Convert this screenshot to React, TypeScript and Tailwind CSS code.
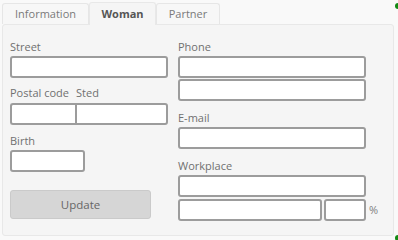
import React from 'react'

const font = { fontFamily: '"Open Sans", "Noto Sans", sans-serif' }

function Field({ className = '' }: { className?: string }) {
  return (
    <div
      className={`shrink-0 h-[22px] bg-white border-2 border-[#9c9c9c] rounded-[3px] ${className}`}
    />
  )
}

function Label({ children, className = '' }: { children: React.ReactNode; className?: string }) {
  return <div className={`h-4 leading-4 text-[11px] text-[#707070] ${className}`}>{children}</div>
}

export default function App() {
  const tabs = ['Information', 'Woman', 'Partner']

  return (
    <div className="relative w-[398px] h-[240px] bg-[#f9f9f9] overflow-hidden" style={font}>
      {/* status dots */}
      <div className="absolute right-[-3px] top-[3px] w-[6px] h-[6px] rounded-full bg-[#138a13]" />
      <div className="absolute right-[-3px] bottom-[-1px] w-[6px] h-[6px] rounded-full bg-[#138a13]" />

      {/* Tabs */}
      <div className="flex items-end pl-[2px] h-[24px]">
        {tabs.map((t) =>
          t === 'Woman' ? (
            <div
              key={t}
              className="w-[67px] h-[23px] -mb-px relative z-10 bg-[#f5f5f5] border border-b-0 border-[#e8e8e8] rounded-t-[3px] flex items-center justify-center text-[11px] font-bold text-[#555]"
            >
              {t}
            </div>
          ) : (
            <div
              key={t}
              className={`${t === 'Information' ? 'w-[87px]' : 'w-[64px]'} h-[21px] bg-[#f7f7f7] border border-b-0 border-[#e6e6e6] rounded-t-[3px] flex items-center justify-center text-[11px] text-[#7a7a7a]`}
            >
              {t}
            </div>
          )
        )}
      </div>

      {/* Panel */}
      <div className="ml-[2px] w-[392px] h-[212px] bg-[#f5f5f5] border border-[#e8e8e8] rounded-[3px] flex gap-[10px] pl-[7px] pt-[14px]">
        {/* left column */}
        <div className="w-[158px] flex flex-col">
          <Label>Street</Label>
          <Field className="mt-px" />

          <div className="mt-[7px] flex h-4 items-center">
            <Label className="w-[66px]">Postal code</Label>
            <Label>Sted</Label>
          </div>
          <div className="mt-[2px] flex">
            <div className="w-[65px] h-[22px] bg-white border-2 border-r-0 border-[#9c9c9c] rounded-l-[3px]" />
            <div className="flex-1 h-[22px] bg-white border-2 border-[#9c9c9c] rounded-r-[3px]" />
          </div>

          <Label className="mt-[8px]">Birth</Label>
          <Field className="mt-px w-[75px]" />

          <button className="mt-[18px] w-[141px] h-[29px] bg-[#d6d6d6] border border-[#cacaca] rounded-[3px] text-[11.5px] text-[#666]">
            Update
          </button>
        </div>

        {/* right column */}
        <div className="w-[188px] flex flex-col">
          <Label>Phone</Label>
          <Field className="mt-px" />
          <Field className="mt-px" />

          <Label className="mt-[9px]">E-mail</Label>
          <Field className="mt-px h-[21px]" />

          <Label className="mt-[9px]">Workplace</Label>
          <Field className="mt-px h-[21px]" />
          <div className="mt-[2px] flex items-center">
            <Field className="w-[144px]" />
            <Field className="ml-[2px] w-[42px]" />
            <span className="ml-[3px] shrink-0 text-[11px] text-[#808080]">%</span>
          </div>
        </div>
      </div>
    </div>
  )
}
